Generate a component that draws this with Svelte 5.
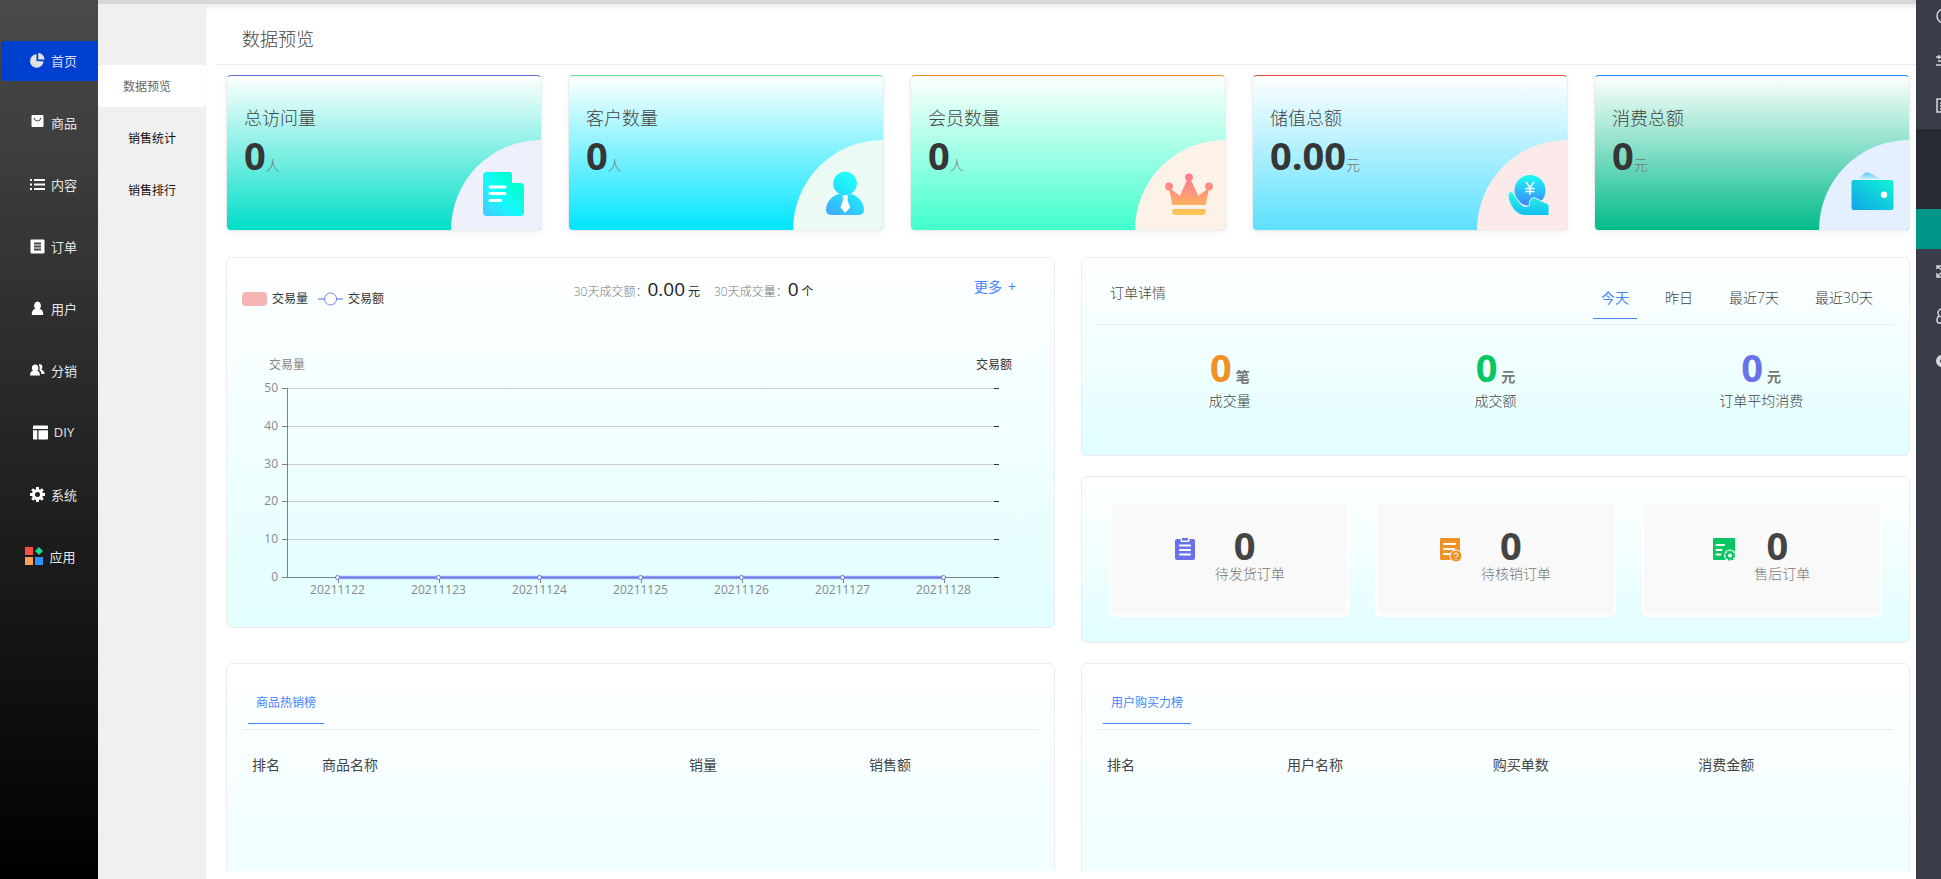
<script lang="ts">
	type Card = {
		id: string;
		title: string;
		value: string;
		unit: string;
	};

	const menus = [
		{ name: "首页", icon: "pie" },
		{ name: "商品", icon: "bag" },
		{ name: "内容", icon: "list" },
		{ name: "订单", icon: "order" },
		{ name: "用户", icon: "user" },
		{ name: "分销", icon: "users" },
		{ name: "DIY", icon: "layout" },
		{ name: "系统", icon: "gear" },
		{ name: "应用", icon: "apps" },
	];

	const subMenus = ["数据预览", "销售统计", "销售排行"];

	const cards: Card[] = [
		{ id: "visit", title: "总访问量", value: "0", unit: "人" },
		{ id: "client", title: "客户数量", value: "0", unit: "人" },
		{ id: "member", title: "会员数量", value: "0", unit: "人" },
		{ id: "stored", title: "储值总额", value: "0.00", unit: "元" },
		{ id: "spend", title: "消费总额", value: "0", unit: "元" },
	];

	const ranges = ["今天", "昨日", "最近7天", "最近30天"];

	const stats = [
		{ name: "成交量", value: 0, unit: "笔", color: "orange" },
		{ name: "成交额", value: 0, unit: "元", color: "green" },
		{ name: "订单平均消费", value: 0, unit: "元", color: "purple" },
	];

	const todos = [
		{ name: "待发货订单", value: 0, icon: "ship" },
		{ name: "待核销订单", value: 0, icon: "verify" },
		{ name: "售后订单", value: 0, icon: "after" },
	];

	const days = ["20211122", "20211123", "20211124", "20211125", "20211126", "20211127", "20211128"];
	const ticks = [50, 40, 30, 20, 10, 0];

	let activeMenu = $state("首页");
	let activeSub = $state("数据预览");
	let activeRange = $state("今天");

	// chart geometry
	const left = 60;
	const top = 38;
	const bottom = 227;
	let chartWidth = $state(827);
	let right = $derived(chartWidth - 60);
	let step = $derived((right - left) / days.length);

	function tickY(value: number) {
		return Math.round(bottom - (value / 50) * (bottom - top)) + 0.5;
	}

	function dayX(index: number) {
		return left + step * (index + 0.5);
	}
</script>

<div class="page">
	<nav class="menu">
		{#each menus as menu}
			<a
				href="#{menu.icon}"
				class:active={activeMenu === menu.name}
				onclick={() => (activeMenu = menu.name)}
			>
				{#if menu.icon === "pie"}
					<svg width="15" height="15" viewBox="0 0 15 15">
						<path d="M6.5 1.2A6.8 6.8 0 1 0 13.6 8.6L6.5 8Z" />
						<path d="M8.2 0A6.6 6.6 0 0 1 14.6 6.6L8.2 6.6Z" />
					</svg>
				{:else if menu.icon === "bag"}
					<svg width="15" height="15" viewBox="0 0 15 15">
						<rect x="1.5" y="0" width="12" height="12" rx="1" />
						<path d="M4.3 2.8a3.2 3.2 0 0 0 6.4 0" class="cut" />
					</svg>
				{:else if menu.icon === "list"}
					<svg width="15" height="15" viewBox="0 0 15 15">
						<path
							d="M0 2h2v2H0zM4 2h11v2H4zM0 6.500h2v2H0zM4 6.500h11v2H4zM0 11h2v2H0zM4 11h11v2H4z"
						/>
					</svg>
				{:else if menu.icon === "order"}
					<svg width="15" height="15" viewBox="0 0 15 15">
						<rect x=".5" y=".5" width="14" height="14" rx="1" />
						<path d="M4 4.500h7M4 7.500h7M4 10.500h7" class="cut thick" />
					</svg>
				{:else if menu.icon === "user"}
					<svg width="15" height="15" viewBox="0 0 15 15">
						<path
							d="M7.500 0.500a3.700 4 0 0 1 2.200 7c2.300 1 3.600 3 3.600 5.500 0 .6-.4 1-1 1H2.700c-.6 0-1-.4-1-1 0-2.500 1.300-4.500 3.600-5.500a3.700 4 0 0 1 2.200-7z"
						/>
					</svg>
				{:else if menu.icon === "users"}
					<svg width="15" height="15" viewBox="0 0 15 15">
						<path
							d="M5.300 1.500a3.200 3.400 0 0 1 2 6c1.700.8 2.600 2.500 2.700 5H0c0-2.500 1-4.200 3-5a3.200 3.400 0 0 1 2.300-6z"
						/>
						<path
							d="M8.600 1.800c3-2 5.200 2.400 2.800 4.600 1.900.7 3 2.100 3.300 4.600h-3.200c-.3-1.800-1.100-3-2.300-3.900 1-1.800.6-3.700-.6-5.300z"
						/>
					</svg>
				{:else if menu.icon === "layout"}
					<svg width="15" height="15" viewBox="0 0 15 15">
						<path
							d="M1 .5h13q1 0 1 1V4H0V1.500q0-1 1-1zM0 5.200h4.300v9.300H1q-1 0-1-1zM5.500 5.200H15v8.300q0 1-1 1H5.500z"
						/>
					</svg>
				{:else if menu.icon === "gear"}
					<svg width="15" height="15" viewBox="0 0 15 15">
						<circle cx="7.500" cy="7.500" r="4" class="ring" />
						<path
							d="M7.500 0v3M7.500 12v3M0 7.500h3M12 7.500h3M2.200 2.200l2.100 2.100M10.700 10.700l2.100 2.100M12.800 2.200l-2.100 2.100M4.300 10.700l-2.100 2.100"
							class="teeth"
						/>
					</svg>
				{:else}
					<svg width="18" height="18" viewBox="0 0 18 18">
						<rect width="8" height="8" fill="#ff4d42" />
						<rect y="10" width="8" height="8" fill="#ff9f55" />
						<rect x="10" y="10" width="8" height="8" fill="#2f93ff" />
						<path d="M14 0l4 4-4 4-4-4z" fill="#19d990" />
					</svg>
				{/if}
				<span>{menu.name}</span>
			</a>
		{/each}
	</nav>

	<nav class="sub-menu">
		{#each subMenus as sub, index}
			<a
				href="#sub-{index}"
				class:active={activeSub === sub}
				onclick={() => (activeSub = sub)}>{sub}</a
			>
		{/each}
	</nav>

	<main>
		<header><h1>数据预览</h1></header>

		<div class="content">
			<section class="cards">
				{#each cards as card}
					<div class="card {card.id}">
						<h2>{card.title}</h2>
						<p><strong>{card.value}</strong><span>{card.unit}</span></p>
						<svg width="90" height="90" viewBox="0 0 90 90">
							<path d="M0 90A90 90 0 0 1 90 0V90z" class="corner" />
							{#if card.id === "visit"}
								<defs>
									<linearGradient id="g-visit" x1="0" y1="1" x2="1" y2="0">
										<stop offset="0" stop-color="#45c8ff" />
										<stop offset=".4" stop-color="#19f7ff" />
										<stop offset=".75" stop-color="#00ffd2" />
										<stop offset="1" stop-color="#00ffc4" />
									</linearGradient>
								</defs>
								<path
									d="M36 32H58q3 0 3 3V43H69q4 0 4 4V72q0 4-4 4H36q-4 0-4-4V36q0-4 4-4z"
									fill="url(#g-visit)"
								/>
								<path d="M39 47H54M39 53.500H54M39 60.500H49.500" class="line" />
							{:else if card.id === "client"}
								<defs>
									<linearGradient
										id="g-client"
										gradientUnits="userSpaceOnUse"
										x1="35"
										y1="75"
										x2="60"
										y2="35"
									>
										<stop offset="0" stop-color="#45a6ff" />
										<stop offset=".6" stop-color="#22e2ff" />
										<stop offset="1" stop-color="#22fff8" />
									</linearGradient>
								</defs>
								<circle cx="52" cy="43.500" r="11.800" fill="url(#g-client)" />
								<path
									d="M52 56C55 55 57 53.800 58 54C66 56.500 71 63 71 70Q71 75 65 75H39Q33 75 33 70C33 63 38 56.500 46 54C48 53.800 50 55 52 56z"
									fill="url(#g-client)"
								/>
								<path
									d="M49.500 55.500H55L54.500 60L57 67.500L52.200 73L47.500 67.500L50 60z"
									fill="#fff"
								/>
							{:else if card.id === "member"}
								<defs>
									<linearGradient
										id="g-member"
										gradientUnits="userSpaceOnUse"
										x1="54"
										y1="33"
										x2="54"
										y2="75"
									>
										<stop offset="0" stop-color="#ff7b92" />
										<stop offset=".4" stop-color="#ff8f80" />
										<stop offset=".75" stop-color="#ffb162" />
										<stop offset="1" stop-color="#ffcb50" />
									</linearGradient>
								</defs>
								<g fill="url(#g-member)">
									<circle cx="34" cy="46.500" r="3.900" />
									<circle cx="54" cy="37.300" r="3.900" />
									<circle cx="74" cy="46.500" r="3.900" />
									<path
										d="M34 48L45 55.700L52.500 39H55.500L63.300 55.700L74 48L70.700 65H37.300z"
									/>
									<path d="M37.300 69H70.700V72Q70.700 75 67.700 75H40.300Q37.300 75 37.300 72z" />
								</g>
							{:else if card.id === "stored"}
								<defs>
									<linearGradient id="g-coin" x1="0" y1="0" x2="0" y2="1">
										<stop offset="0" stop-color="#17fff2" />
										<stop offset="1" stop-color="#4182ff" />
									</linearGradient>
									<linearGradient id="g-hand" x1="0" y1="0" x2="0" y2="1">
										<stop offset="0" stop-color="#2ffce0" />
										<stop offset="1" stop-color="#0fbcf0" />
									</linearGradient>
								</defs>
								<circle cx="53" cy="50.500" r="15.500" fill="url(#g-coin)" />
								<path
									d="M49 42L53 47.500L57 42M53 47.500V55M48.500 48.500H57.500M48.500 51.500H57.500"
									class="yen"
								/>
								<path
									d="M31 56C31.500 50.500 35 50.500 37 54.500L43 63C46 67 50 67 52.500 65.500C51.500 61.500 54 56.500 58 58L72 64.500V75.500H48C39 75.500 32 65 31 56z"
									fill="url(#g-hand)"
									class="hand"
								/>
							{:else}
								<defs>
									<linearGradient id="g-wallet" x1="0" y1="1" x2="1" y2="0">
										<stop offset="0" stop-color="#12a3e4" />
										<stop offset="1" stop-color="#0ff5d8" />
									</linearGradient>
									<linearGradient id="g-flap" x1="0" y1="0" x2="0" y2="1">
										<stop offset="0" stop-color="#55c8ff" />
										<stop offset="1" stop-color="#c5ebff" />
									</linearGradient>
								</defs>
								<path d="M40 38.500L46 32.800Q48 31.500 50.500 33L62 39z" fill="url(#g-flap)" />
								<rect x="32.500" y="40" width="42" height="30" rx="2.500" fill="url(#g-wallet)" />
								<circle cx="65" cy="54.700" r="3.200" fill="#fff" />
							{/if}
						</svg>
					</div>
				{/each}
			</section>

			<section class="row">
				<div class="panel trade">
					<div class="trade-head">
						<ul class="legend">
							<li>
								<svg width="25" height="14"><rect width="25" height="14" rx="4" fill="#f6b5b5" /></svg>
								交易量
							</li>
							<li>
								<svg width="25" height="14">
									<path d="M0 7H25" stroke="#a5b0f2" stroke-width="2" />
									<circle cx="12.500" cy="7" r="6" fill="#fff" stroke="#7582ea" />
								</svg>
								交易额
							</li>
						</ul>
						<p class="summary">
							<span>30天成交额：</span><b>0.00</b>元<span class="second">30天成交量：</span><b>0</b>个
						</p>
						<a class="more" href="#more">更多<span>+</span></a>
					</div>
					<div class="chart" bind:clientWidth={chartWidth}>
						<svg width="100%" height="270">
							<text x={left} y="19" class="label middle">交易量</text>
							<text x={right} y="19" class="label middle dark">交易额</text>
							{#each ticks as tick}
								<path d="M{left} {tickY(tick)}H{right}" stroke={tick ? "#ccc" : "#7c8285"} />
								<path d="M{left - 5} {tickY(tick)}H{left}" stroke="#7c8285" />
								<path d="M{right} {tickY(tick)}h5" stroke="#333" />
								<text x={left - 9} y={tickY(tick) + 3} class="label end">{tick}</text>
							{/each}
							<path d="M{left + 0.5} {top}V{bottom + 1}" stroke="#7c8285" />
							{#each days as day, index}
								<path d="M{Math.round(dayX(index)) + 0.5} {bottom}v6" stroke="#7c8285" />
								<text x={dayX(index)} y={bottom + 17} class="label middle">{day}</text>
							{/each}
							<path
								d="M{dayX(0)} {bottom + 0.5}H{dayX(days.length - 1)}"
								stroke="#6572e8"
								stroke-opacity=".3"
								stroke-width="4"
							/>
							<path
								d="M{dayX(0)} {bottom + 0.5}H{dayX(days.length - 1)}"
								stroke="#6572e8"
								stroke-width="2"
							/>
							{#each days as day, index}
								<circle cx={dayX(index)} cy={bottom + 0.5} r="2" fill="#fff" stroke="#6572e8" />
							{/each}
						</svg>
					</div>
				</div>

				<div class="column">
					<div class="panel orders">
						<div class="orders-head">
							<h3>订单详情</h3>
							<div class="ranges">
								{#each ranges as range}
									<button
										class:active={activeRange === range}
										onclick={() => (activeRange = range)}>{range}</button
									>
								{/each}
							</div>
						</div>
						<div class="stats">
							{#each stats as stat}
								<div>
									<p><strong class={stat.color}>{stat.value}</strong><b>{stat.unit}</b></p>
									<span>{stat.name}</span>
								</div>
							{/each}
						</div>
					</div>

					<div class="panel todos">
						{#each todos as todo}
							<div class="todo">
								<svg width="22" height="24" viewBox="0 0 22 24">
									{#if todo.icon === "ship"}
										<path
											d="M4 1H6.500V2.500Q6.500 4 8 4H14Q15.500 4 15.500 2.500V1H19Q21 1 21 3V20Q21 22 19 22H3Q1 22 1 20V3Q1 1 3 1z"
											fill="#6972e8"
										/>
										<rect x="8" y="0" width="6" height="2.500" fill="#6972e8" />
										<path d="M6 7.500H16M6 12H16M6 16.500H16" class="line" />
									{:else if todo.icon === "verify"}
										<rect width="20" height="22" rx="1" fill="#ef9125" />
										<path d="M4 6H15M4 11H14M4 16H9" class="line" />
										<circle cx="16" cy="18" r="6" fill="#ef9125" stroke="#fff" />
										<path
											d="M14 17Q14 15 16 15T18 17Q18 18 16 18.700V19.500M16 20.500V21.700"
											fill="none"
											stroke="#fff"
										/>
									{:else}
										<rect width="22" height="22" rx="1" fill="#08c661" />
										<path d="M3.500 7H11M3.500 12H8.500M3.500 16.500H7.500" class="line" />
										<circle cx="17" cy="17.500" r="6" fill="#f9f9f9" />
										<circle
											cx="17"
											cy="17.500"
											r="4.300"
											fill="#08c661"
											stroke="#08c661"
											stroke-width="2"
											stroke-dasharray="1.700 1.680"
										/>
										<circle cx="17" cy="17.500" r="2" fill="#f9f9f9" />
									{/if}
								</svg>
								<div>
									<strong>{todo.value}</strong>
									<span>{todo.name}</span>
								</div>
							</div>
						{/each}
					</div>
				</div>
			</section>

			<section class="row">
				<div class="panel rank">
					<div class="rank-head"><button class="active">商品热销榜</button></div>
					<table class="goods">
						<thead>
							<tr><th>排名</th><th>商品名称</th><th>销量</th><th>销售额</th></tr>
						</thead>
					</table>
				</div>
				<div class="panel rank">
					<div class="rank-head"><button class="active">用户购买力榜</button></div>
					<table class="buyers">
						<thead>
							<tr><th>排名</th><th>用户名称</th><th>购买单数</th><th>消费金额</th></tr>
						</thead>
					</table>
				</div>
			</section>
		</div>
	</main>

	<aside>
		<div class="group">
			<svg width="16" height="16" viewBox="0 0 16 16"><circle cx="8" cy="8" r="7" /></svg>
			<svg width="16" height="16" viewBox="0 0 16 16">
				<path d="M0 4H16M2 8H14M0 12H16M3 2V6" />
			</svg>
			<svg width="16" height="16" viewBox="0 0 16 16">
				<rect x="1" y="1" width="14" height="13" />
				<path d="M4 5H12M4 8H12M4 11H12" />
			</svg>
		</div>
		<div class="opened"></div>
		<div class="current"></div>
		<div class="group">
			<svg width="16" height="16" viewBox="0 0 16 16">
				<path d="M1 6V3H5M11 3H15V6M1 10V14H5M11 14H15V10M2 4L7 8L2 13" />
			</svg>
			<svg width="16" height="16" viewBox="0 0 16 16">
				<circle cx="6" cy="5" r="4" />
				<path d="M3 8Q1 9 1 12T3 15H12" />
			</svg>
			<svg width="16" height="16" viewBox="0 0 16 16">
				<circle cx="6" cy="8" r="4" class="bold" />
			</svg>
		</div>
	</aside>
</div>

<style>
	:global(body) {
		margin: 0;
		overflow: hidden;
		background: #fff;
	}

	.page {
		display: flex;
		height: 100vh;
		overflow: hidden;
		font-family: "Open Sans", "Noto Sans CJK SC", sans-serif;
		font-size: 14px;
		font-weight: 300;
		color: #333;
	}

	h1,
	h2,
	h3,
	p,
	ul {
		margin: 0;
		padding: 0;
		font-weight: inherit;
	}

	a {
		text-decoration: none;
	}

	button {
		border: 0;
		background: none;
		font: inherit;
		cursor: pointer;
	}

	.menu {
		display: flex;
		flex-direction: column;
		gap: 22px;
		flex: none;
		box-sizing: border-box;
		width: 98px;
		padding: 41px 0 0 1px;
		background: linear-gradient(#4a4a4a, #000);
	}

	.menu a {
		display: flex;
		align-items: center;
		justify-content: center;
		gap: 6px;
		box-sizing: border-box;
		height: 40px;
		padding: 0 0 2px 8px;
		border-radius: 4px 0 0 4px;
		font-size: 13px;
		font-weight: 400;
		color: #e6e6e6;
	}

	.menu a.active {
		background: #0040d0;
		color: #d5daea;
	}

	.menu a:last-child {
		padding-left: 2px;
	}

	.menu svg {
		fill: #fff;
	}

	.menu .active svg {
		fill: #e0e0e0;
	}

	.menu .cut {
		fill: none;
		stroke: #444;
	}

	.menu .thick {
		stroke-width: 2;
	}

	.menu .ring {
		fill: none;
		stroke: #fff;
		stroke-width: 3;
	}

	.menu .teeth {
		stroke: #fff;
		stroke-width: 3;
	}

	.sub-menu {
		display: flex;
		flex-direction: column;
		gap: 10px;
		flex: none;
		box-sizing: border-box;
		width: 108px;
		padding-top: 61px;
		border-top: 4px solid #d8d8d8;
		background: #f0f0f0;
	}

	.sub-menu a {
		height: 42px;
		padding-left: 30px;
		border-radius: 4px;
		font-size: 12px;
		font-weight: 400;
		line-height: 44px;
		color: #111;
	}

	.sub-menu a.active {
		padding-left: 25px;
		background: #fff;
		color: #666;
	}

	main {
		display: flex;
		flex-direction: column;
		flex: 1;
		min-width: 0;
		box-sizing: border-box;
		padding-bottom: 8px;
		border-top: 4px solid #d8d8d8;
		box-shadow: inset 0 6px 6px -4px #e4e4e4;
	}

	header {
		flex: none;
		height: 60px;
		margin-left: 11px;
		padding-left: 25px;
		border-bottom: 1px solid #ebebeb;
	}

	h1 {
		font-size: 18px;
		line-height: 70px;
		color: #444;
	}

	.content {
		flex: 1;
		min-height: 0;
		overflow: hidden;
		padding: 10px 6px 0 20px;
	}

	.cards {
		display: grid;
		grid-template-columns: repeat(5, 1fr);
		gap: 26px;
		margin-bottom: 26px;
	}

	.card {
		position: relative;
		box-sizing: border-box;
		height: 156px;
		padding: 28px 17px;
		border: 1px solid #ececec;
		border-radius: 5px;
		box-shadow: 0 2px 6px #0000000d;
		overflow: hidden;
	}

	.card h2 {
		font-size: 18px;
		line-height: 28px;
		color: #444;
	}

	.card p {
		display: flex;
		align-items: baseline;
		line-height: 46px;
		color: #777;
	}

	.card strong {
		font-size: 38px;
		font-weight: 700;
		color: #363636;
	}

	.card svg {
		position: absolute;
		right: 0;
		bottom: 0;
	}

	.visit {
		border-top-color: #5f6ce6;
		background: linear-gradient(#fff, #00dec8);
	}

	.client {
		border-top-color: #5fdf92;
		background: linear-gradient(#fff, #00e5ff);
	}

	.member {
		border-top-color: #ef9125;
		background: linear-gradient(#fff, #40ffcc);
	}

	.stored {
		border-top-color: #ee4743;
		background: linear-gradient(#fff, #5ce0ff);
	}

	.spend {
		border-top-color: #1b82f8;
		background: linear-gradient(#fff, #00bb88);
	}

	.visit .corner {
		fill: #eef0fc;
	}

	.client .corner {
		fill: #ecfaf4;
	}

	.member .corner {
		fill: #fdf2e7;
	}

	.stored .corner {
		fill: #fceaea;
	}

	.spend .corner {
		fill: #e4f0ff;
	}

	.line {
		fill: none;
		stroke: #fff;
		stroke-width: 2;
		stroke-linecap: round;
	}

	.visit .line {
		stroke-width: 3;
	}

	.yen {
		fill: none;
		stroke: #fff;
		stroke-width: 1.400;
	}

	.hand {
		stroke: #e2f4f8;
		stroke-width: 1;
	}

	.row {
		display: grid;
		grid-template-columns: 1fr 1fr;
		align-items: start;
		gap: 26px;
		margin-bottom: 20px;
	}

	.column {
		display: grid;
		gap: 20px;
	}

	.panel {
		box-sizing: border-box;
		border: 1px solid #ececec;
		border-radius: 6px;
		background: linear-gradient(#fff, #e2feff);
	}

	.trade {
		height: 371px;
	}

	.trade-head {
		display: grid;
		grid-template-columns: 3fr 3fr 1fr;
		align-items: start;
		height: 92px;
		padding: 19px 38px 0 15px;
		box-sizing: border-box;
	}

	.legend {
		display: flex;
		gap: 10px;
		padding-top: 12px;
		list-style: none;
		font-size: 12px;
		font-weight: 400;
		line-height: 20px;
		color: #333;
	}

	.legend li {
		display: flex;
		align-items: center;
		gap: 5px;
	}

	.summary {
		font-size: 12px;
		font-weight: 400;
		line-height: 24px;
		white-space: nowrap;
		color: #222;
	}

	.summary span {
		font-weight: 300;
		color: #777;
	}

	.summary .second {
		margin-left: 14px;
	}

	.summary b {
		margin-right: 3px;
		font-size: 19px;
		font-weight: 400;
	}

	.more {
		justify-self: end;
		font-weight: 400;
		line-height: 20px;
		color: #4384ff;
	}

	.more span {
		margin-left: 6px;
	}

	.chart svg {
		display: block;
	}

	.chart path {
		fill: none;
	}

	.label {
		font-size: 12px;
		font-weight: 400;
		fill: #888;
	}

	.dark {
		fill: #333;
	}

	.middle {
		text-anchor: middle;
	}

	.end {
		text-anchor: end;
	}

	.orders {
		height: 199px;
		padding: 0 15px;
	}

	.orders-head {
		display: flex;
		justify-content: space-between;
		height: 66px;
		padding: 0 13px;
		border-bottom: 1px solid #ececec;
	}

	h3 {
		font-size: 14px;
		line-height: 70px;
		color: #444;
	}

	.ranges {
		display: flex;
		align-items: flex-end;
		gap: 20px;
		padding-bottom: 5px;
	}

	.ranges button {
		padding: 0 8px 9px;
		border-bottom: 1px solid transparent;
		line-height: 22px;
		color: #444;
	}

	.ranges button.active {
		border-color: #4384ff;
		font-weight: 400;
		color: #4384ff;
	}

	.stats {
		display: grid;
		grid-template-columns: repeat(3, 1fr);
		padding-top: 19px;
		text-align: center;
	}

	.stats p {
		display: flex;
		align-items: baseline;
		justify-content: center;
		gap: 4px;
	}

	.stats strong {
		font-size: 38px;
		font-weight: 700;
		line-height: 46px;
	}

	.stats b {
		font-weight: 600;
		line-height: 14px;
		color: #777;
	}

	.stats span {
		display: block;
		line-height: 22px;
		color: #444;
	}

	.orange {
		color: #ef9125;
	}

	.green {
		color: #08c661;
	}

	.purple {
		color: #6972e8;
	}

	.todos {
		display: grid;
		grid-template-columns: repeat(3, 1fr);
		gap: 26px;
		padding: 25px 27px;
	}

	.todo {
		display: flex;
		justify-content: center;
		gap: 19px;
		height: 111px;
		border: 2px solid #fff;
		border-radius: 6px;
		background: #f9f9f9;
	}

	.todo svg {
		margin-top: 34px;
	}

	.todo div {
		padding-top: 22px;
		text-align: center;
	}

	.todo strong {
		display: block;
		padding-right: 10px;
		font-size: 38px;
		font-weight: 700;
		line-height: 38px;
		color: #444;
	}

	.todo span {
		display: block;
		line-height: 20px;
		color: #777;
	}

	.rank {
		height: 400px;
		padding: 0 15px;
	}

	.rank-head {
		display: flex;
		align-items: flex-end;
		height: 65px;
		padding: 0 6px;
		border-bottom: 1px solid #ececec;
	}

	.rank-head button {
		margin-bottom: 5px;
		padding: 0 8px 8px;
		border-bottom: 1px solid #4384ff;
		font-size: 12px;
		font-weight: 400;
		line-height: 24px;
		color: #4384ff;
	}

	table {
		width: 100%;
		margin-top: 15px;
		border-collapse: collapse;
		table-layout: fixed;
	}

	th {
		padding: 0 10px;
		font-weight: 400;
		line-height: 40px;
		text-align: left;
		color: #444;
	}

	.goods th:nth-child(1) {
		width: 50px;
	}

	.goods th:nth-child(n + 3) {
		width: 160px;
	}

	.buyers th:nth-child(1) {
		width: 160px;
	}

	aside {
		flex: none;
		width: 25px;
		overflow: hidden;
		background: #393d49;
	}

	.group {
		display: flex;
		flex-direction: column;
		gap: 29px;
		box-sizing: border-box;
		height: 129px;
		padding: 8px 0 0 20px;
	}

	.group svg {
		flex: none;
		fill: none;
		stroke: #d5d7dc;
		stroke-width: 1.500;
	}

	.group .bold {
		stroke-width: 4;
	}

	.opened {
		height: 80px;
		background: #282b33;
	}

	.current {
		height: 40px;
		margin-bottom: 6px;
		background: #009688;
	}
</style>
